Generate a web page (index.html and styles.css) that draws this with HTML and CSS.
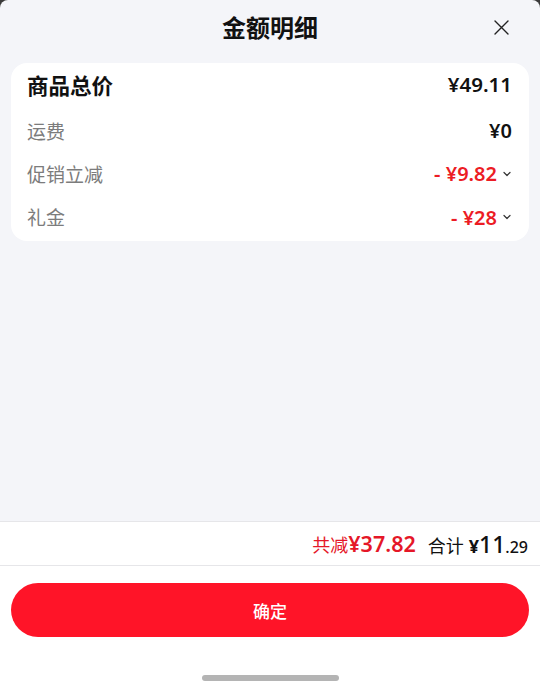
FILE: index.html
```html
<!DOCTYPE html>
<html lang="zh-CN">
<head>
<meta charset="utf-8">
<link rel="stylesheet" href="styles.css">
</head>
<body>
<div class="sheet">
  <header class="header">
    <span></span>
    <h1 class="title">金额明细</h1>
    <button class="close" aria-label="关闭">
      <svg width="15" height="15" viewBox="0 0 15 15"><path d="M1 1L14 14M14 1L1 14" stroke="#222" stroke-width="1.4" fill="none" stroke-linecap="round"/></svg>
    </button>
  </header>

  <section class="card">
    <div class="row first">
      <span class="label main">商品总价</span>
      <span class="value main">¥49.11</span>
    </div>
    <div class="row">
      <span class="label">运费</span>
      <span class="value">¥0</span>
    </div>
    <div class="row">
      <span class="label">促销立减</span>
      <span class="value red">- ¥9.82<svg class="chev" width="8" height="6" viewBox="0 0 8 6"><path d="M1 1.5L4 4.5L7 1.5" stroke="#333" stroke-width="1.2" fill="none" stroke-linecap="round" stroke-linejoin="round"/></svg></span>
    </div>
    <div class="row">
      <span class="label">礼金</span>
      <span class="value red">- ¥28<svg class="chev" width="8" height="6" viewBox="0 0 8 6"><path d="M1 1.5L4 4.5L7 1.5" stroke="#333" stroke-width="1.2" fill="none" stroke-linecap="round" stroke-linejoin="round"/></svg></span>
    </div>
  </section>

  <div class="spacer"></div>

  <div class="summary">
    <span class="saved">共减<span class="saved-num">¥37.82</span></span>
    <span class="total">合计 <span class="yen">¥</span><span class="int">11</span><span class="dec">.29</span></span>
  </div>

  <div class="actions">
    <button class="confirm">确定</button>
  </div>

  <div class="home-bar"><span class="indicator"></span></div>
</div>
</body>
</html>
```

FILE: styles.css
```css
* { box-sizing: border-box; }

html, body {
  margin: 0;
  padding: 0;
  background: #3a3a3a;
}

body {
  font-family: "Noto Sans", "Noto Sans CJK SC", sans-serif;
  width: 540px;
  height: 689px;
  overflow: hidden;
}

.sheet {
  width: 540px;
  height: 689px;
  background: #f4f5f9;
  border-radius: 8px 8px 0 0;
  display: flex;
  flex-direction: column;
}

.header {
  height: 58px;
  display: grid;
  grid-template-columns: 1fr auto 1fr;
  align-items: center;
  padding-bottom: 3px;
}

.title {
  margin: 0;
  font-size: 24px;
  font-weight: 700;
  color: #111;
  line-height: 1;
}

.close {
  justify-self: end;
  margin-right: 31px;
  width: 15px;
  height: 15px;
  padding: 0;
  border: 0;
  background: none;
  display: flex;
}

.card {
  margin: 5px 11px 0;
  background: #fff;
  border-radius: 16px;
  padding: 0 17px 2px 16px;
}

.row {
  height: 43.3px;
  display: flex;
  align-items: center;
  justify-content: space-between;
}

.row.first {
  height: 46px;
  padding-bottom: 4px;
}

.label {
  font-size: 19px;
  color: #7c7c7c;
}

.label.main {
  font-size: 21.5px;
  font-weight: 700;
  color: #111;
}

.value {
  font-size: 20px;
  font-weight: 600;
  color: #111;
  display: flex;
  align-items: center;
}

.value.main {
  font-size: 20.5px;
}

.value.red {
  color: #ec1c24;
}

.chev {
  margin-left: 6px;
  margin-right: 1px;
}

.spacer {
  flex: 1;
}

.summary {
  height: 45px;
  background: #fff;
  border-top: 1px solid #e6e6e9;
  border-bottom: 1px solid #e6e6e9;
  display: flex;
  align-items: center;
  justify-content: flex-end;
  padding-right: 12px;
  gap: 12px;
}

.saved {
  color: #e51728;
  font-size: 18px;
}

.saved-num {
  font-size: 21.5px;
  font-weight: 600;
}

.total {
  color: #111;
  font-size: 18px;
  display: flex;
  align-items: baseline;
}

.total .yen {
  margin-left: 5px;
  font-weight: 700;
  font-size: 18px;
}

.total .int {
  font-size: 23px;
  font-weight: 500;
}

.total .dec {
  font-size: 16px;
  font-weight: 500;
}

.actions {
  background: #fff;
  padding: 17px 11px 0;
}

.confirm {
  width: 100%;
  height: 54px;
  border: 0;
  border-radius: 27px;
  background: #ff1428;
  color: #fff;
  font-family: "Noto Sans CJK SC", sans-serif;
  font-size: 17px;
  font-weight: 500;
}

.home-bar {
  background: #fff;
  height: 52px;
  display: flex;
  justify-content: center;
  padding-top: 38px;
}

.indicator {
  width: 137px;
  height: 6px;
  border-radius: 3px;
  background: #b4b4b4;
}
```
